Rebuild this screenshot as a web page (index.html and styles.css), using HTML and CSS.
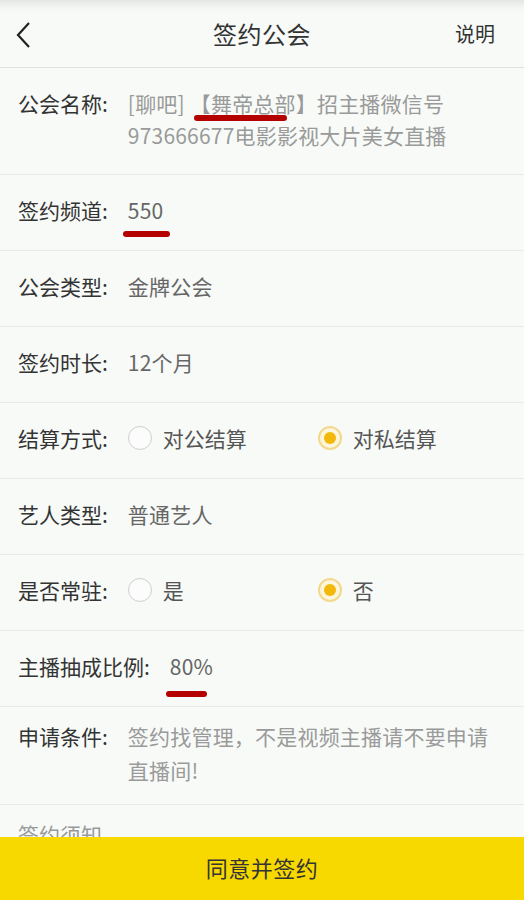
FILE: index.html
```html
<!DOCTYPE html>
<html lang="zh-CN">
<head>
<meta charset="utf-8">
<title>签约公会</title>
<link rel="stylesheet" href="styles.css">
</head>
<body>
<div class="page">
  <header class="header">
    <svg class="back" width="20" height="30" viewBox="0 0 20 30"><polyline points="14,3 3,15 14,27" fill="none" stroke="#222" stroke-width="2.2" stroke-linejoin="miter"/></svg>
    <div class="title">签约公会</div>
    <div class="help">说明</div>
  </header>

  <div class="row first">
    <div class="label">公会名称:</div>
    <div class="value light">[聊吧] 【舞帝总部】招主播微信号<br>973666677电影影视大片美女直播</div>
    <span class="ul ul-1"></span>
  </div>
  <div class="row">
    <div class="label">签约频道:</div>
    <div class="value">550</div>
    <span class="ul ul-2"></span>
  </div>
  <div class="row">
    <div class="label">公会类型:</div>
    <div class="value">金牌公会</div>
  </div>
  <div class="row">
    <div class="label">签约时长:</div>
    <div class="value">12个月</div>
  </div>
  <div class="row">
    <div class="label">结算方式:</div>
    <div class="options">
      <div class="opt"><span class="radio"></span>对公结算</div>
      <div class="opt"><span class="radio on"></span>对私结算</div>
    </div>
  </div>
  <div class="row">
    <div class="label">艺人类型:</div>
    <div class="value">普通艺人</div>
  </div>
  <div class="row">
    <div class="label">是否常驻:</div>
    <div class="options">
      <div class="opt"><span class="radio"></span>是</div>
      <div class="opt"><span class="radio on"></span>否</div>
    </div>
  </div>
  <div class="row">
    <div class="label">主播抽成比例:</div>
    <div class="value">80%</div>
    <span class="ul ul-3"></span>
  </div>
  <div class="row tight">
    <div class="label">申请条件:</div>
    <div class="value light">签约找管理，不是视频主播请不要申请<br>直播间!</div>
  </div>
  <div class="row tight notice">
    <div class="label grey">签约须知</div>
  </div>
</div>
<div class="action">同意并签约</div>
</body>
</html>
```

FILE: styles.css
```css
html, body {
  margin: 0;
  padding: 0;
  background: #f7faf7;
}
body {
  font-family: "Noto Sans CJK SC", "Noto Sans", sans-serif;
  color: #333;
  width: 524px;
  height: 900px;
  overflow: hidden;
}
.page {
  display: flex;
  flex-direction: column;
}
.header {
  height: 67px;
  border-bottom: 1px solid #dfe2df;
  background: linear-gradient(#e4e6e4 0, #f3f6f3 8px, #f7faf7 14px);
  display: flex;
  align-items: center;
  position: relative;
  padding: 0 29px 0 15px;
}
.back {
  display: block;
  margin-top: 2px;
}
.title {
  flex: 1;
  text-align: center;
  font-size: 24px;
  color: #333;
  margin-left: 34px;
  letter-spacing: 0.5px;
}
.help {
  font-size: 20px;
  color: #333;
}
.row {
  position: relative;
  display: flex;
  align-items: flex-start;
  padding: 19px 28px 24px 18px;
  border-bottom: 1px solid #e7ebe7;
  font-size: 21px;
  line-height: 32px;
  min-height: 32px;
}
.row.first {
  padding-bottom: 23px;
}
.row.tight {
  padding: 12px 28px 17px 18px;
  line-height: 34px;
}
.label {
  color: #333;
  white-space: nowrap;
  margin-right: 20px;
}
.label.grey {
  color: #999;
}
.value {
  color: #666;
  flex: 1;
  letter-spacing: 0.2px;
}
.value.light {
  color: #9a9a9a;
}
.options {
  display: flex;
  align-items: center;
  color: #555;
}
.opt {
  display: flex;
  align-items: center;
  width: 190px;
}
.radio {
  box-sizing: border-box;
  width: 24px;
  height: 24px;
  border-radius: 50%;
  border: 1.5px solid #cfcfcf;
  margin-right: 11px;
  background: #fbfcfb;
  position: relative;
}
.radio.on {
  border: 2px solid #f2d88a;
  background: #fdf6dc;
}
.radio.on::after {
  content: "";
  position: absolute;
  left: 4px;
  top: 4px;
  width: 12px;
  height: 12px;
  border-radius: 50%;
  background: #f3b80a;
}
.ul {
  position: absolute;
  height: 6px;
  border-radius: 3px;
  background: #b50000;
}
.ul-1 { left: 194px; top: 47px; width: 93px; }
.ul-2 { left: 123px; top: 56px; width: 47px; }
.ul-3 { left: 166px; top: 60px; width: 41px; }
.action {
  position: fixed;
  left: 0;
  right: 0;
  bottom: 0;
  height: 63px;
  background: #f7d900;
  color: #333;
  font-size: 22px;
  display: flex;
  align-items: center;
  justify-content: center;
  letter-spacing: 0.5px;
  padding-bottom: 3px;
  box-sizing: border-box;
}
```
